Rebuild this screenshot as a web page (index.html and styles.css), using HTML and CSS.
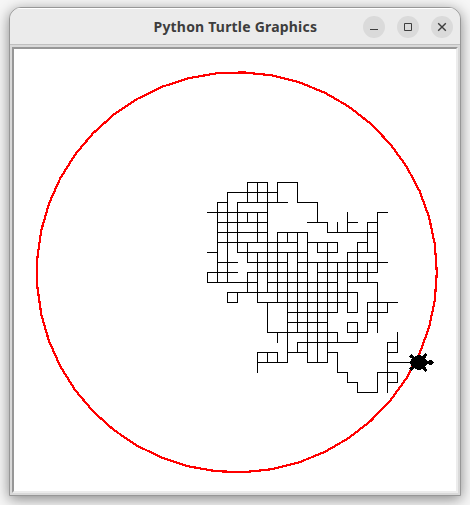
FILE: index.html
```html
<!DOCTYPE html>
<html lang="en">
<head>
<meta charset="utf-8">
<title>Python Turtle Graphics</title>
<link rel="stylesheet" href="styles.css">
</head>
<body>
<main class="window">
  <header class="titlebar">
    <h1 class="title">Python Turtle Graphics</h1>
    <div class="controls">
      <button class="control" aria-label="Minimize"><svg viewBox="0 0 22 22"><path d="M7 13.5h8"/></svg></button>
      <button class="control" aria-label="Maximize"><svg viewBox="0 0 22 22"><path d="M7.5 7.5h7v7h-7z"/></svg></button>
      <button class="control" aria-label="Close"><svg class="smooth" viewBox="0 0 22 22"><path d="M7.2 7.2l7.6 7.6M14.8 7.2l-7.6 7.6"/></svg></button>
    </div>
  </header>
  <div class="frame">
    <svg class="canvas" viewBox="14 49 442 442">
      <polygon id="ring" class="ring"/>
      <path id="trail" class="trail"/>
      <polygon id="turtle" class="turtle"/>
    </svg>
  </div>
</main>
<script src="turtle.js"></script>
</body>
</html>
```
FILE: styles.css
```css
* { box-sizing: border-box; }
body {
  margin: 0;
  width: 470px;
  height: 505px;
  padding: 7px 9px 9px;
  overflow: hidden;
  background: #f6f6f6;
}
.window {
  width: 452px;
  height: 489px;
  border: 1px solid #979797;
  border-radius: 12px 12px 0 0;
  background: #d9d9d9;
  box-shadow: 0 3px 14px rgba(0, 0, 0, 0.46);
  overflow: hidden;
}
.titlebar {
  display: grid;
  grid-template-columns: 1fr auto 1fr;
  align-items: center;
  height: 37px;
  padding-right: 7px;
  background: #ebebeb;
  border-top: 1px solid #fff;
  border-bottom: 1px solid #bfbfbf;
}
.title {
  grid-column: 2;
  margin: 0;
  width: 164px;
  font: bold 14px/20px "Noto Sans", "Open Sans", sans-serif;
  letter-spacing: 0.2px;
  white-space: nowrap;
  color: #3d3d3d;
  transform: translateX(4px);
}
.controls {
  display: flex;
  justify-content: flex-end;
  gap: 12px;
}
.control {
  width: 22px;
  height: 22px;
  padding: 0;
  border: 0;
  border-radius: 50%;
  background: #dadada;
}
.control svg {
  display: block;
  width: 22px;
  height: 22px;
  fill: none;
  stroke: #3d3d3d;
  stroke-width: 1;
}
.control .smooth { stroke-width: 1.4; }
.frame {
  margin: 2px;
  width: 446px;
  height: 446px;
  border: 2px solid;
  border-color: #979797 #ececec #ececec #979797;
  background: #fff;
}
.canvas {
  display: block;
  width: 442px;
  height: 442px;
  shape-rendering: crispEdges;
}
.ring { fill: none; stroke: #f00; stroke-width: 2.2; }
.trail { fill: none; stroke: #000; stroke-width: 1; stroke-linecap: square; }
.turtle { fill: #000; stroke: #000; stroke-width: 1; stroke-linejoin: round; }
```
FILE: turtle.js
```js
// Grid spans walked by the turtle, as "start-end ..." per line in steps of 10px.
const rows = [
  "4-6 7-9", "2-7", "1-2 3-8 9-11", "0-6 17-18", "1-6 10-12 14-15 16-17",
  "1-6 7-10 12-17", "1-9 10-13 15-16", "0-1 3-10 11-13 14-17", "1-3 4-8 9-18",
  "0-3 4-10 11-17", "0-5 6-13 14-17", "2-15", "2-3 5-14 16-19",
  "8-13 14-15 16-18", "8-12 14-15 16-17", "6-13 14-16", "9-15 18-19",
  "5-7 8-10 12-13 18-19", "5-8 10-12 18-21", "13-14 17-19", "14-15 18-19", "15-17"
];
const cols = [
  "9-10", "2-10", "1-10 11-12", "2-7 11-12", "0-2 3-4 6-8 9-11", "0-2 3-6 7-12 17-19",
  "0-11 12-15 17-18", "0-2 5-12 15-16 17-18", "5-6 7-18", "0-2 5-15 16-17", "5-18",
  "2-4 6-7 8-18", "4-5 6-18", "4-5 6-7 8-13 15-16 17-19", "3-5 7-13 14-15 19-20",
  "6-10 11-13 14-16 20-21", "4-7 8-10 12-15", "3-9 10-15 19-21", "12-13 16-21", "15-17 19-20"
];
const X = c => 207.5 + 10 * c;
const Y = r => 182.5 + 10 * r;
const spans = s => s.split(" ").map(p => p.split("-").map(Number));
let d = "";
rows.forEach((s, r) => spans(s).forEach(([a, b]) => { d += `M${X(a)} ${Y(r)}H${X(b)}`; }));
cols.forEach((s, c) => spans(s).forEach(([a, b]) => { d += `M${X(c)} ${Y(a)}V${Y(b)}`; }));
document.getElementById("trail").setAttribute("d", d);

// A radius-200 circle drawn as 45 chords, starting at the rightmost point.
const ring = [];
for (let k = 0; k < 45; k++) {
  const t = k * 8 * Math.PI / 180;
  ring.push(`${(236.8 + 200 * Math.cos(t)).toFixed(2)},${(272.3 - 200 * Math.sin(t)).toFixed(2)}`);
}
document.getElementById("ring").setAttribute("points", ring.join(" "));

const shape = [
  [0,16],[-2,14],[-1,10],[-4,7],[-7,9],[-9,8],[-6,5],[-7,1],[-5,-3],[-8,-6],[-6,-8],[-4,-5],
  [0,-7],[4,-5],[6,-8],[8,-6],[5,-3],[7,1],[6,5],[9,8],[7,9],[4,7],[1,10],[2,14]
];
document.getElementById("turtle").setAttribute("points",
  shape.map(([x, y]) => `${417.5 + y},${362.5 + x}`).join(" "));
```
